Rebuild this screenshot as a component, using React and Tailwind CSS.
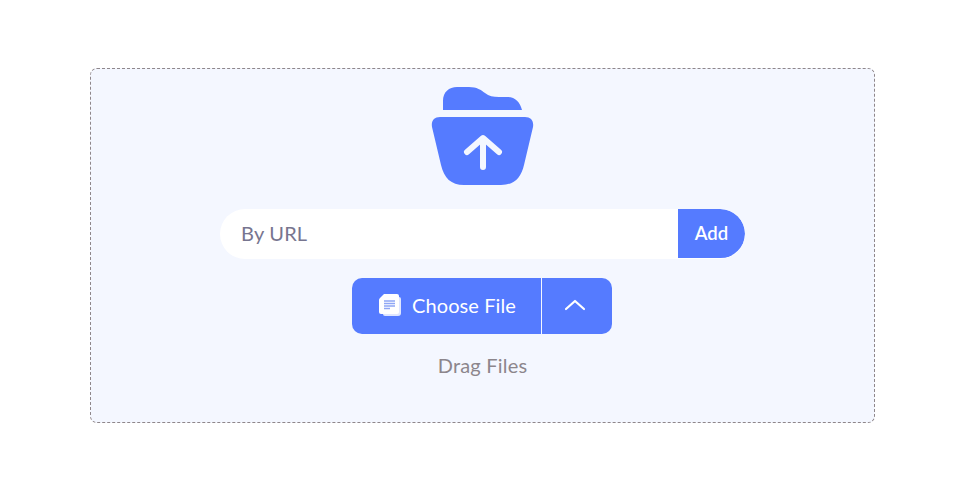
export default function App() {
  return (
    <div className="h-[484px] w-[975px] bg-white pl-[90px] pt-[68px] font-['Lato','Noto_Sans',sans-serif]">
      <div className="flex h-[355px] w-[785px] flex-col items-center rounded-[7px] border border-dashed border-[#8f878b] bg-[#f4f7ff] pt-[18px]">
        <svg width="104" height="100" viewBox="0 0 104 100" className="block shrink-0" fill="#557bff">
          <path d="M12 23 V14 C12 5 18 0 26 0 H38 C46 0 50 3 54 6 C58 9 62 10 68 10 H76 C84 10 89 15 91 23 Z" />
          <path d="M9 30 H94 C100 30 103 34 102 40 L93 78 C90 91 83 98 70 98 H33 C20 98 13 91 10 78 L1 40 C0 34 3 30 9 30 Z" />
          <path d="M52 80 V53 M36 65 L52 51 L68 65" fill="none" stroke="#f4f7ff" strokeWidth="6" strokeLinecap="round" strokeLinejoin="round" />
        </svg>
        <div className="mt-[22px] flex h-[50px] w-[525px] overflow-hidden rounded-[25px] bg-white">
          <div className="flex flex-1 items-center pb-[2px] pl-[21px] text-[20px] tracking-[0.2px] text-[#77758f]">By URL</div>
          <button className="mb-[1px] w-[67px] rounded-r-[25px] bg-[#557bff] text-[18.500px] font-semibold text-white">Add</button>
        </div>
        <div className="mr-[2px] mt-[19px] flex h-[56px] w-[260px] overflow-hidden rounded-[10px] bg-[#557bff] text-white">
          <div className="flex w-[190px] items-center justify-center gap-[11px] border-r border-[#f4f7ff] pb-[2px] pl-[3px]">
            <svg width="22" height="22" viewBox="0 0 22 22" className="shrink-0">
              <path d="M5 3 H20 Q22 3 22 5 V19 Q22 22 19 22 H6 Q4 22 4 20 Z" fill="#dfe6ff" />
              <path d="M5 0 L1 4 Q0 5 0 6 V18 Q0 20 2 20 H18 Q20 20 20 18 V2 Q20 0 18 0 Z" fill="#ffffff" />
              <path d="M5 7 H16 M5 9.500 H16 M5 12 H16 M5 14.500 H11" stroke="#8fa6f5" strokeWidth="1.500" fill="none" />
            </svg>
            <span className="text-[20px] tracking-[0.1px]">Choose File</span>
          </div>
          <div className="flex flex-1 items-center justify-center pb-[3px] pr-[4px]">
            <svg width="22" height="13" viewBox="0 0 22 13" fill="none" stroke="#fff" strokeWidth="2.200" strokeLinecap="round" strokeLinejoin="round">
              <path d="M2 11 L11 3 L20 11" />
            </svg>
          </div>
        </div>
        <div className="mt-[19px] text-[20px] leading-[24px] tracking-[0.2px] text-[#8c868c]">Drag Files</div>
      </div>
    </div>
  );
}
